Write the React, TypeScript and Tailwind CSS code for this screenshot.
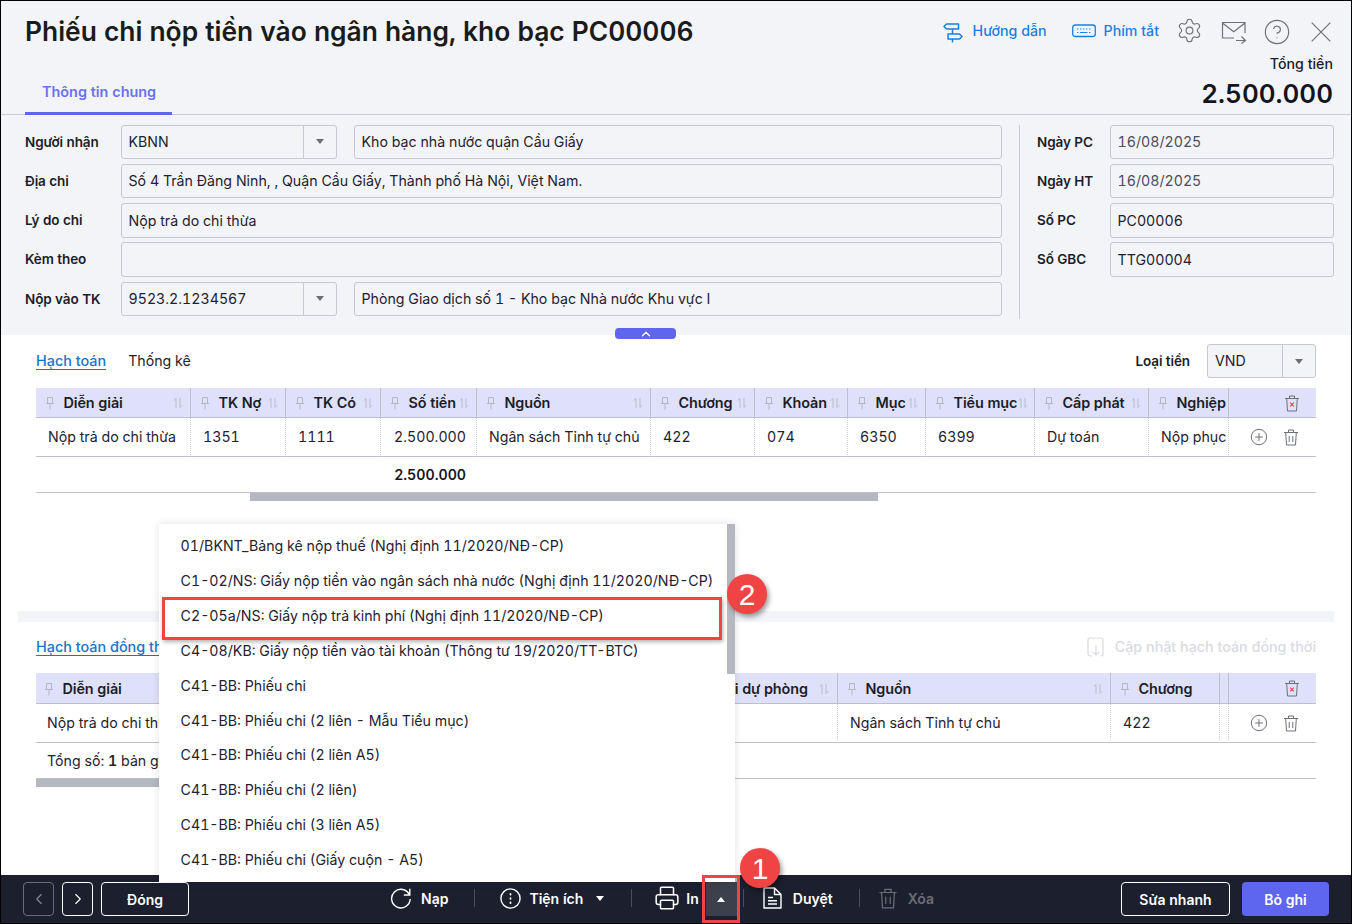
import React from "react";
import { Settings, CircleHelp, Printer, ChevronLeft, ChevronRight, ChevronUp } from "lucide-react";

const Caret = ({ cls = "border-t-[#6b6d78]" }: { cls?: string }) => (
  <span className={`inline-block w-0 h-0 border-x-[4px] border-x-transparent border-t-[5px] ${cls}`} />
);

const Pin = () => (
  <svg width="12" height="14" viewBox="0 0 12 14" fill="none" stroke="#b4b6c6" strokeWidth="1" className="shrink-0">
    <path d="M3.5 1.5h5v6h-5zM2 7.5h8M6 7.5v6" />
  </svg>
);

const Sort = () => (
  <svg width="12" height="12" viewBox="0 0 12 12" fill="none" stroke="#b9bbc9" strokeWidth="1" className="shrink-0 ml-auto">
    <path d="M4 11V1.5L1.8 3.7M8 1v9.5l2.2-2.2" />
  </svg>
);

const TrashIcon = ({ x = false, color = "#6e7079", size = 18 }: { x?: boolean; color?: string; size?: number }) => (
  <svg width={size} height={size} viewBox="0 0 18 18" fill="none" stroke={color} strokeWidth="1">
    <path d="M2 4.5h14M6.5 4.5V2h5v2.5M3.7 4.5l.8 12.5h9l.8-12.5" />
    {x ? <path d="M7.2 8.6l3.6 3.8M10.8 8.6l-3.6 3.8" stroke="#ef4444" strokeWidth="1.2" /> : <path d="M7.2 8v6M10.8 8v6" />}
  </svg>
);

const PlusCircle = () => (
  <svg width="18" height="18" viewBox="0 0 18 18" fill="none" stroke="#6e7079" strokeWidth="1">
    <circle cx="9" cy="9" r="7.7" />
    <path d="M9 5.2v7.6M5.2 9h7.6" />
  </svg>
);

const Signpost = () => (
  <svg width="20" height="20" viewBox="0 0 20 20" fill="none" stroke="#1a7fe3" strokeWidth="1.5" strokeLinejoin="round" className="mt-[3px]">
    <path d="M3.5 1h12v5h-12L1 3.5zM5 11h11.5L19 13.5 16.5 16H5zM9.5 6v5M9.5 16v3.5" />
  </svg>
);

const KeyboardIcon = () => (
  <svg width="24" height="14" viewBox="0 0 24 14" fill="none" stroke="#1a7fe3" strokeWidth="1.3">
    <rect x="0.7" y="1" width="22.6" height="11.5" rx="2.5" />
    <path d="M5 5h1.4M8 5h1.4M11 5h1.4M14 5h1.4M17 5h1.4M5 8.5h1.4M8 8.5h7.4M17 8.5h1.4" strokeWidth="1.2" />
  </svg>
);

const MailArrow = () => (
  <svg width="26" height="23" viewBox="0 0 26 23" fill="none" stroke="#6e7079" strokeWidth="1.2" className="mt-[2px]">
    <path d="M13 17H1.5V1.5h22.5V12M1.5 2l11.2 8.8L24 2" />
    <path d="M15 19.5h9M20.5 15.5l4 4-4 3" />
  </svg>
);

const CloseIcon = () => (
  <svg width="20" height="20" viewBox="0 0 20 20" fill="none" stroke="#6e7079" strokeWidth="1.2" className="mt-[2px]">
    <path d="M0.7 0.7l18.6 18.6M19.3 0.7L0.7 19.3" />
  </svg>
);

const Reload = () => (
  <svg width="22" height="22" viewBox="0 0 22 22" fill="none" stroke="white" strokeWidth="1.4">
    <path d="M19.5 8A9.3 9.3 0 1 0 20.2 12M19.8 1.8V8h-6" />
  </svg>
);

const DotsCircle = () => (
  <svg width="21" height="21" viewBox="0 0 21 21" fill="none" stroke="white" strokeWidth="1.4">
    <circle cx="10.5" cy="10.5" r="9.6" />
    <path d="M10.5 6v.6M10.5 10.2v.6M10.5 14.4v.6" strokeWidth="1.8" strokeLinecap="round" />
  </svg>
);

const DocIcon = () => (
  <svg width="19" height="22" viewBox="0 0 19 22" fill="none" stroke="white" strokeWidth="1.4" strokeLinejoin="round">
    <path d="M1 1h10.5L18 7.5V21H1zM11.5 1v6.5H18M5 10.5h5M5 13.8h9M5 17h9" />
  </svg>
);

const ImportIcon = () => (
  <svg width="17" height="20" viewBox="0 0 17 20" fill="none" stroke="#d9dbe1" strokeWidth="1.2">
    <path d="M5 19H3a2 2 0 0 1-2-2V3a2 2 0 0 1 2-2h11a2 2 0 0 1 2 2v14a2 2 0 0 1-2 2M9 8v10M5.8 14.8L9 18l3.2-3.2" />
  </svg>
);

const Field = ({ value, valueCls = "text-[#1f2130]" }: { value?: string; valueCls?: string }) => (
  <div className={`h-[34.5px] flex-1 min-w-0 rounded-[3px] border border-[#c6c8d2] flex items-center px-[6.5px] ${valueCls}`}>
    {value}
  </div>
);

const Combo = ({ value }: { value: string }) => (
  <div className="h-[34.5px] w-[216px] shrink-0 rounded-[3px] border border-[#c6c8d2] flex items-center text-[#1f2130]">
    <span className="flex-1 pl-[6.5px]">{value}</span>
    <span className="w-[33px] h-full border-l border-[#c6c8d2] flex items-center justify-center">
      <Caret />
    </span>
  </div>
);

const Label = ({ children, w }: { children: React.ReactNode; w: string }) => (
  <div className={`${w} shrink-0 font-semibold text-[13.5px] text-[#1b1d29] tracking-[-0.1px]`}>{children}</div>
);

const Th = ({ label, pin = true, sort = true, cls = "" }: { label?: string; pin?: boolean; sort?: boolean; cls?: string }) => (
  <div className={`flex items-center pl-[8px] pr-[6px] border-r border-b border-r-[#bdbfce] border-b-[#bdbfcd] bg-[#dfe1fa] min-w-0 overflow-hidden ${cls}`}>
    {pin && <Pin />}
    {label && <span className="ml-[7.5px] font-semibold text-[14.4px] whitespace-nowrap text-[#1b1d29] tracking-[-0.1px]">{label}</span>}
    {sort && <Sort />}
  </div>
);

const Td = ({ children, cls = "" }: { children?: React.ReactNode; cls?: string }) => (
  <div className={`flex items-center px-[12px] border-r border-b [border-right-style:dotted] border-r-[#cfd0d8] border-b-[#bdbfcd] whitespace-nowrap overflow-hidden text-[#1f2130] ${cls}`}>
    {children}
  </div>
);

const menuItems = [
  "01/BKNT_Bảng kê nộp thuế (Nghị định 11/2020/NĐ-CP)",
  "C1-02/NS: Giấy nộp tiền vào ngân sách nhà nước (Nghị định 11/2020/NĐ-CP)",
  "C2-05a/NS: Giấy nộp trả kinh phí (Nghị định 11/2020/NĐ-CP)",
  "C4-08/KB: Giấy nộp tiền vào tài khoản (Thông tư 19/2020/TT-BTC)",
  "C41-BB: Phiếu chi",
  "C41-BB: Phiếu chi (2 liên - Mẫu Tiểu mục)",
  "C41-BB: Phiếu chi (2 liên A5)",
  "C41-BB: Phiếu chi (2 liên)",
  "C41-BB: Phiếu chi (3 liên A5)",
  "C41-BB: Phiếu chi (Giấy cuộn - A5)",
];

const Sep = () => <span className="w-px h-[18px] bg-[#4a4d5a]" />;

const Badge = ({ n, cls }: { n: string; cls: string }) => (
  <div className={`absolute w-[40px] h-[40px] rounded-full bg-[#f04444] text-white text-[30px] flex items-center justify-center shadow-[2px_3px_5px_rgba(0,0,0,0.4)] [font-family:'Liberation_Sans',sans-serif] ${cls}`}>
    {n}
  </div>
);

export default function App() {
  return (
    <div className="relative w-[1352px] h-[924px] border border-black bg-white flex flex-col overflow-hidden text-[14.2px] tabular-nums text-[#1f2130] [font-family:Inter,sans-serif]">
      {/* Header panel */}
      <div className="relative h-[334px] shrink-0 bg-[#f3f4f8]">
        <div className="h-[113.5px] border-b border-[#c9cbd6] flex justify-between pl-[24px] pr-[18px]">
          <div className="flex flex-col justify-between">
            <h1 className="pt-[12px] text-[26.4px] leading-[36px] font-semibold text-[#1a1c1a] whitespace-nowrap">
              Phiếu chi nộp tiền vào ngân hàng, kho bạc PC00006
            </h1>
            <div className="w-[147px] h-[40px] -mb-px border-b-[3px] border-[#5e65ef] pl-[17px] pt-[6px] text-[14.4px] font-semibold text-[#6a70f2]">
              Thông tin chung
            </div>
          </div>
          <div className="flex flex-col items-end">
            <div className="flex items-center h-[22px] mt-[19px] text-[14.2px] text-[#1a7fe3] font-medium">
              <Signpost />
              <span className="ml-[10px]">Hướng dẫn</span>
              <span className="ml-[25px]"><KeyboardIcon /></span>
              <span className="ml-[8px]">Phím tắt</span>
              <Settings size={27} strokeWidth={1} className="ml-[17px] -mt-[1px] text-[#6e7079]" />
              <span className="ml-[18px]"><MailArrow /></span>
              <CircleHelp size={28} strokeWidth={1} className="ml-[16px] mt-[2px] text-[#6e7079]" />
              <span className="ml-[20px] mr-[2px]"><CloseIcon /></span>
            </div>
            <div className="mt-[11px] font-medium text-[#1b1d29]">Tổng tiền</div>
            <div className="mt-[3px] text-[26px] leading-[34px] font-semibold text-[#14151c]">2.500.000</div>
          </div>
        </div>

        <div className="flex pl-[24px] pr-[17px] pt-[10px]">
          <div className="w-[977px] flex flex-col gap-[4.75px]">
            <div className="flex items-center">
              <Label w="w-[96px]">Người nhận</Label>
              <Combo value="KBNN" />
              <div className="w-[17px] shrink-0" />
              <Field value="Kho bạc nhà nước quận Cầu Giấy" />
            </div>
            <div className="flex items-center">
              <Label w="w-[96px]">Địa chi</Label>
              <Field value="Số 4 Trần Đăng Ninh, , Quận Cầu Giấy, Thành phố Hà Nội, Việt Nam." />
            </div>
            <div className="flex items-center">
              <Label w="w-[96px]">Lý do chi</Label>
              <Field value="Nộp trả do chi thừa" />
            </div>
            <div className="flex items-center">
              <Label w="w-[96px]">Kèm theo</Label>
              <Field />
            </div>
            <div className="flex items-center">
              <Label w="w-[96px]">Nộp vào TK</Label>
              <Combo value="9523.2.1234567" />
              <div className="w-[17px] shrink-0" />
              <Field value="Phòng Giao dịch số 1 - Kho bạc Nhà nước Khu vực I" />
            </div>
          </div>
          <div className="w-px h-[194px] bg-[#c9cbd6] ml-[17px]" />
          <div className="ml-[17px] w-[297px] flex flex-col gap-[4.75px]">
            <div className="flex items-center">
              <Label w="w-[73px]">Ngày PC</Label>
              <Field value="16/08/2025" valueCls="text-[#4a4d63]" />
            </div>
            <div className="flex items-center">
              <Label w="w-[73px]">Ngày HT</Label>
              <Field value="16/08/2025" valueCls="text-[#4a4d63]" />
            </div>
            <div className="flex items-center">
              <Label w="w-[73px]">Số PC</Label>
              <Field value="PC00006" />
            </div>
            <div className="flex items-center">
              <Label w="w-[73px]">Số GBC</Label>
              <Field value="TTG00004" />
            </div>
          </div>
        </div>

        <button className="absolute left-[614px] top-[327px] w-[61px] h-[11px] rounded-[4px] bg-[#5e65ef] flex items-center justify-center z-10">
          <ChevronUp size={14} strokeWidth={2.2} className="text-white" />
        </button>
      </div>

      {/* Main */}
      <div className="flex-1 min-h-0 px-[17px] pt-[9px]">
        {/* Table 1 */}
        <div className="px-[18px]">
          <div className="h-[34px] flex items-center">
            <span className="text-[14.4px] text-[#1a73c8] font-medium underline underline-offset-[3px]">Hạch toán</span>
            <span className="ml-[22px] text-[#1f2130]">Thống kê</span>
            <span className="ml-auto font-semibold text-[13.5px] text-[#1b1d29] tracking-[-0.1px]">Loại tiền</span>
            <div className="ml-[17px] w-[109px] h-[34px] rounded-[3px] border border-[#c6c8d2] bg-[#f3f4f8] flex items-center">
              <span className="flex-1 pl-[7px]">VND</span>
              <span className="w-[33px] h-full border-l border-[#c6c8d2] flex items-center justify-center"><Caret /></span>
            </div>
          </div>
          <div className="mt-[10px] grid grid-cols-[155px_95px_95px_96px_174px_104px_93px_78px_109px_114px_80px_87px]">
            <Th label="Diễn giải" cls="h-[30px]" />
            <Th label="TK Nợ" cls="h-[30px]" />
            <Th label="TK Có" cls="h-[30px]" />
            <Th label="Số tiền" cls="h-[30px]" />
            <Th label="Nguồn" cls="h-[30px]" />
            <Th label="Chương" cls="h-[30px]" />
            <Th label="Khoản" cls="h-[30px]" />
            <Th label="Mục" cls="h-[30px]" />
            <Th label="Tiểu mục" cls="h-[30px]" />
            <Th label="Cấp phát" cls="h-[30px]" />
            <Th label="Nghiệp" sort={false} cls="h-[30px]" />
            <div className="h-[30px] bg-[#dfe1fa] border-b border-[#bdbfcd] flex items-center justify-end pr-[15px]"><TrashIcon x /></div>

            <Td cls="h-[39px]">Nộp trả do chi thừa</Td>
            <Td cls="h-[39px]">1351</Td>
            <Td cls="h-[39px]">1111</Td>
            <Td cls="h-[39px] justify-end !pr-[10px]">2.500.000</Td>
            <Td cls="h-[39px]">Ngân sách Tỉnh tự chủ</Td>
            <Td cls="h-[39px]">422</Td>
            <Td cls="h-[39px]">074</Td>
            <Td cls="h-[39px]">6350</Td>
            <Td cls="h-[39px]">6399</Td>
            <Td cls="h-[39px]">Dự toán</Td>
            <Td cls="h-[39px]">Nộp phục</Td>
            <div className="h-[39px] border-b border-[#bdbfcd] flex items-center justify-end gap-[14px] pr-[16px]"><PlusCircle /><TrashIcon /></div>
          </div>
          <div className="h-[36px] border-b border-[#bdbfcd] flex items-center pl-[345px] w-full">
            <span className="w-[85px] text-right font-semibold text-[#14151c]">2.500.000</span>
          </div>
          <div className="h-[8px] w-[628px] ml-[214px] bg-[#b5b8c0]" />
        </div>

        {/* Band */}
        <div className="mt-[110px] h-[11px] bg-[#f3f4f8]" />

        {/* Table 2 */}
        <div className="px-[18px]">
          <div className="mt-[10px] h-[30px] flex items-center">
            <span className="text-[14.4px] text-[#1a73c8] font-medium underline underline-offset-[3px] whitespace-nowrap">Hạch toán đồng thời</span>
            <span className="ml-auto"><ImportIcon /></span>
            <span className="ml-[11px] text-[14.3px] font-medium text-[#d9dbe1]">Cập nhật hạch toán đồng thời</span>
          </div>
          <div className="mt-[11px] grid grid-cols-[155px_499px_148px_273px_109px_9px_87px]">
            <Th label="Diễn giải" cls="h-[31px] !pl-[7px] pt-[1px]" />
            <Th cls="h-[31px]" />
            <Th label="Chi dự phòng" pin={false} cls="h-[31px] !pl-[18px] !pr-[7px] pt-[1px]" />
            <Th label="Nguồn" cls="h-[31px] pt-[1px]" />
            <Th label="Chương" sort={false} cls="h-[31px] pt-[1px]" />
            <Th pin={false} sort={false} cls="h-[31px] !p-0" />
            <div className="h-[31px] bg-[#dfe1fa] border-b border-[#bdbfcd] flex items-center justify-end pr-[15px]"><TrashIcon x /></div>

            <Td cls="h-[39px] !pl-[11px]">Nộp trả do chi thừa</Td>
            <Td cls="h-[39px]" />
            <Td cls="h-[39px]" />
            <Td cls="h-[39px]">Ngân sách Tỉnh tự chủ</Td>
            <Td cls="h-[39px]">422</Td>
            <Td cls="h-[39px] !p-0" />
            <div className="h-[39px] border-b border-[#bdbfcd] flex items-center justify-end gap-[14px] pr-[16px]"><PlusCircle /><TrashIcon /></div>
          </div>
          <div className="h-[36px] border-b border-[#bdbfcd] flex items-center pl-[11px]">
            Tổng số:&nbsp;<b className="font-semibold">1</b>&nbsp;bản ghi
          </div>
          <div className="h-[8px] w-[130px] bg-[#b5b8c0]" />
        </div>
      </div>

      {/* Bottom bar */}
      <div className="h-[48px] shrink-0 bg-[#1c1f2e] flex items-center pl-[22px] pr-[22px] text-[14px] text-white font-semibold">
        <button className="w-[31px] h-[34px] rounded-[4px] border border-[#6a6c78] flex items-center justify-center text-[#8a8c96]"><ChevronLeft size={18} strokeWidth={1.5} /></button>
        <button className="ml-[8px] w-[31px] h-[34px] rounded-[4px] border border-white flex items-center justify-center"><ChevronRight size={18} strokeWidth={1.5} /></button>
        <button className="ml-[8px] w-[88px] h-[34px] rounded-[4px] border border-white">Đóng</button>

        <div className="ml-[201px] mb-[2px] flex items-center">
          <Reload />
          <span className="ml-[9px]">Nạp</span>
          <span className="ml-[26px] mr-[25px] flex"><Sep /></span>
          <DotsCircle />
          <span className="ml-[8px]">Tiện ích</span>
          <span className="ml-[13px] flex"><Caret cls="border-t-white" /></span>
          <span className="ml-[27px] mr-[22px] flex"><Sep /></span>
          <Printer size={26} strokeWidth={1.4} />
          <span className="ml-[6px]">In</span>
          <button className="relative ml-[7px] w-[31px] h-[34px] translate-y-[1px] bg-[#3c3f4c] flex items-center justify-center">
            <span className="absolute left-0 right-0 -top-[5px] h-[5px] bg-[#b5b8bc]" />
            <span className="w-0 h-0 border-x-[4px] border-x-transparent border-b-[5px] border-b-white" />
          </button>
          <span className="ml-[6px] mr-[19px] flex"><Sep /></span>
          <DocIcon />
          <span className="ml-[11px]">Duyệt</span>
          <span className="ml-[26px] mr-[17px] flex"><Sep /></span>
          <TrashIcon color="#6b6d78" size={22} />
          <span className="ml-[9px] text-[#6b6d78]">Xóa</span>
        </div>

        <button className="ml-auto w-[109px] h-[34px] rounded-[4px] border border-white">Sửa nhanh</button>
        <button className="ml-[12px] w-[87px] h-[34px] rounded-[4px] bg-[#5e65ef]">Bỏ ghi</button>
      </div>

      {/* Print dropdown */}
      <div className="absolute left-[158px] top-[523px] w-[576px] h-[358px] bg-white shadow-[0_0_8px_rgba(0,0,0,0.12)] overflow-hidden z-20">
        <div className="pt-[4.3px] pl-[21.6px]">
          {menuItems.map((m) => (
            <div key={m} className="h-[34.9px] flex items-center whitespace-nowrap text-[#1f2130]">{m}</div>
          ))}
        </div>
        <div className="absolute right-0 top-0 w-[8px] h-[150px] bg-[#b5b8c0]" />
      </div>

      {/* Annotations */}
      <div className="absolute left-[161px] top-[596px] w-[560px] h-[43px] border-[3px] border-[#ef4444] shadow-[1px_2px_4px_rgba(0,0,0,0.3)] z-30" />
      <Badge n="2" cls="left-[726px] top-[573px] z-30" />
      <div className="absolute left-[701px] top-[874px] w-[38px] h-[48px] border-[3px] border-[#ef4444] z-30" />
      <Badge n="1" cls="left-[739px] top-[847px] z-30" />
    </div>
  );
}
